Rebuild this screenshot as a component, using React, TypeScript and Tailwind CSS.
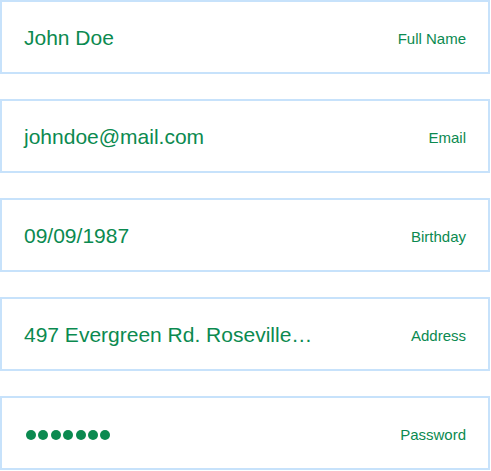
const fields = [
  { label: "Full Name", value: "John Doe" },
  { label: "Email", value: "johndoe@mail.com" },
  { label: "Birthday", value: "09/09/1987" },
  { label: "Address", value: "497 Evergreen Rd. Roseville…" },
  { label: "Password", value: "", password: true },
];

export default function App() {
  return (
    <div
      className="flex w-[490px] flex-col gap-[25px] bg-white"
      style={{ fontFamily: '"Liberation Sans", Arial, sans-serif' }}
    >
      {fields.map((field) => (
        <div
          key={field.label}
          className="flex h-[74px] items-center justify-between border-2 border-[#c7e2fb] pl-[22px] pr-[22px] text-[#0b8a50]"
        >
          {field.password ? (
            <div className="mt-[4px] flex items-center gap-[2.4px] pl-[2px]">
              {Array.from({ length: 7 }).map((_, i) => (
                <span key={i} className="h-[10px] w-[10px] rounded-full bg-[#0b8a50]" />
              ))}
            </div>
          ) : (
            <span className="text-[21px] leading-none">{field.value}</span>
          )}
          <span className="mt-[2px] text-[15px] leading-none">{field.label}</span>
        </div>
      ))}
    </div>
  );
}
